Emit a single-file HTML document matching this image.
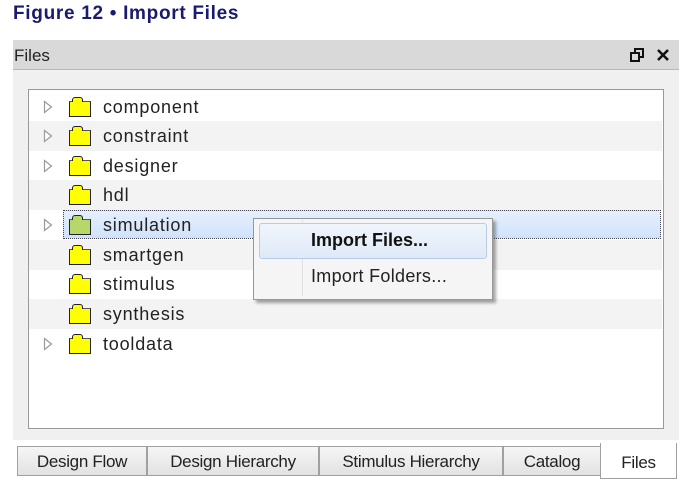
<!DOCTYPE html><html><head><style>
body{margin:0;width:699px;height:490px;background:#fff;position:relative;overflow:hidden;font-family:"Liberation Sans",sans-serif}
.a{position:absolute}
.row{position:absolute;left:29px;width:633px;height:30px}
.tri{position:absolute;left:43px;width:10px;height:14px}
.fold{position:absolute;left:69px;width:20px;height:14px;background:#ffff00;border:1px solid #222;border-top-color:#555}
.fold:before{content:"";position:absolute;left:2px;top:-5px;width:9px;height:4px;background:inherit;border:1px solid #222;border-bottom:none;border-radius:3px 3px 0 0}
.lbl{position:absolute;left:103px;font-size:18px;color:#222;line-height:20px;letter-spacing:0.8px}
.tab{position:absolute;top:446px;height:30px;border:1px solid #a0a0a0;background:linear-gradient(#f6f6f6,#e2e2e2);font-size:17px;color:#222;text-align:center;line-height:30px;box-sizing:border-box;letter-spacing:-0.3px}
</style></head><body>
<div class="a" style="left:13px;top:3px;font-weight:bold;font-size:19px;color:#1a1a6e;letter-spacing:0.7px">Figure 12 • Import Files</div>
<div class="a" style="left:13px;top:40px;width:666px;height:400px;background:#f0f0f0"></div>
<div class="a" style="left:13px;top:40px;width:666px;height:29px;background:#d9d9d9;border-bottom:1px solid #b8b8b8"></div>
<div class="a" style="left:14px;top:46px;font-size:17px;color:#222">Files</div>
<svg class="a" style="left:630px;top:48px" width="14" height="14"><rect x="1" y="5" width="8" height="8" fill="none" stroke="#111" stroke-width="2"/><path d="M5 5V1h8v8h-4" fill="none" stroke="#111" stroke-width="2"/></svg>
<svg class="a" style="left:656px;top:48px" width="14" height="14"><path d="M2 2L12 12M12 2L2 12" stroke="#111" stroke-width="2.6"/></svg>
<div class="a" style="left:28px;top:89px;width:634px;height:338px;background:#fff;border:1px solid #999"></div>
<div class="row" style="top:121px;background:#f3f3f3"></div>
<div class="row" style="top:180px;background:#f3f3f3"></div>
<div class="row" style="top:240px;background:#f3f3f3"></div>
<div class="row" style="top:299px;background:#f3f3f3"></div>
<div class="a" style="left:63px;top:210px;width:596px;height:27px;background:linear-gradient(#e6f0fd,#cfe2fb);border:1px dotted #445"></div>
<svg class="tri" style="top:100px"><path d="M1.5 1.5L8.5 7L1.5 12.5Z" fill="#fff" stroke="#9a9a9a" stroke-width="1.2"/></svg><div class="fold" style="top:101px"></div><div class="lbl" style="top:97px">component</div>
<svg class="tri" style="top:129px"><path d="M1.5 1.5L8.5 7L1.5 12.5Z" fill="#fff" stroke="#9a9a9a" stroke-width="1.2"/></svg><div class="fold" style="top:130px"></div><div class="lbl" style="top:126px">constraint</div>
<svg class="tri" style="top:159px"><path d="M1.5 1.5L8.5 7L1.5 12.5Z" fill="#fff" stroke="#9a9a9a" stroke-width="1.2"/></svg><div class="fold" style="top:160px"></div><div class="lbl" style="top:156px">designer</div>
<div class="fold" style="top:189px"></div><div class="lbl" style="top:185px">hdl</div>
<svg class="tri" style="top:218px"><path d="M1.5 1.5L8.5 7L1.5 12.5Z" fill="#fff" stroke="#9a9a9a" stroke-width="1.2"/></svg><div class="fold" style="top:219px;background:#b6d86a"></div><div class="lbl" style="top:215px">simulation</div>
<div class="fold" style="top:249px"></div><div class="lbl" style="top:245px">smartgen</div>
<div class="fold" style="top:278px"></div><div class="lbl" style="top:274px">stimulus</div>
<div class="fold" style="top:308px"></div><div class="lbl" style="top:304px">synthesis</div>
<svg class="tri" style="top:337px"><path d="M1.5 1.5L8.5 7L1.5 12.5Z" fill="#fff" stroke="#9a9a9a" stroke-width="1.2"/></svg><div class="fold" style="top:338px"></div><div class="lbl" style="top:334px">tooldata</div>
<div class="a" style="left:253px;top:218px;width:238px;height:80px;background:#f5f5f5;border:1px solid #979797;box-shadow:3px 3px 3px rgba(0,0,0,.35)"></div>
<div class="a" style="left:302px;top:220px;width:1px;height:76px;background:#e2e2e2"></div>
<div class="a" style="left:259px;top:223px;width:226px;height:34px;background:linear-gradient(#f0f5fc,#dfe9f7);border:1px solid #b8cce8;border-radius:3px"></div>
<div class="a" style="left:311px;top:230px;font-size:18px;font-weight:bold;color:#111">Import Files...</div>
<div class="a" style="left:311px;top:266px;font-size:18px;color:#222;letter-spacing:0.3px">Import Folders...</div>
<div class="tab" style="left:17px;width:130px">Design Flow</div>
<div class="tab" style="left:147px;width:172px">Design Hierarchy</div>
<div class="tab" style="left:319px;width:184px">Stimulus Hierarchy</div>
<div class="tab" style="left:503px;width:98px">Catalog</div>
<div class="tab" style="left:600px;top:443px;height:36px;width:77px;background:#fff;border-top:none;line-height:40px">Files</div>
</body></html>
